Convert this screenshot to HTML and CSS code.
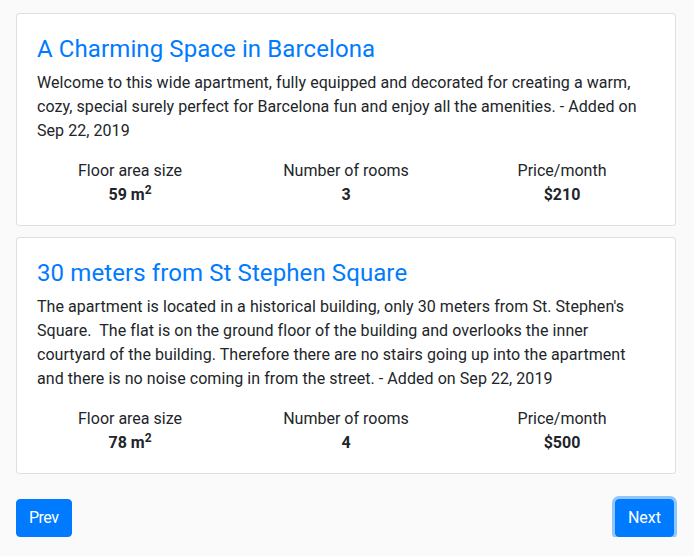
FILE: index.html
```html
<!DOCTYPE html>
<html lang="en">
<head>
<meta charset="utf-8">
<title>Apartments</title>
<link rel="stylesheet" href="styles.css">
</head>
<body>
<main class="page">
  <div class="card">
    <h4 class="card-title">A Charming Space in Barcelona</h4>
    <p class="card-text">Welcome to this wide apartment, fully equipped and decorated for creating a warm, cozy, special surely perfect for Barcelona fun and enjoy all the amenities. - Added on Sep 22, 2019</p>
    <div class="stats">
      <div class="stat"><div class="label">Floor area size</div><div class="value">59 m<sup>2</sup></div></div>
      <div class="stat"><div class="label">Number of rooms</div><div class="value">3</div></div>
      <div class="stat"><div class="label">Price/month</div><div class="value">$210</div></div>
    </div>
  </div>
  <div class="card">
    <h4 class="card-title">30 meters from St Stephen Square</h4>
    <p class="card-text">The apartment is located in a historical building, only 30 meters from St. Stephen's Square.&nbsp; The flat is on the ground floor of the building and overlooks the inner courtyard of the building. Therefore there are no stairs going up into the apartment and there is no noise coming in from the street. - Added on Sep 22, 2019</p>
    <div class="stats">
      <div class="stat"><div class="label">Floor area size</div><div class="value">78 m<sup>2</sup></div></div>
      <div class="stat"><div class="label">Number of rooms</div><div class="value">4</div></div>
      <div class="stat"><div class="label">Price/month</div><div class="value">$500</div></div>
    </div>
  </div>
  <nav class="pager">
    <button class="btn btn-prev" type="button">Prev</button>
    <button class="btn btn-focus" type="button">Next</button>
  </nav>
</main>
</body>
</html>
```
FILE: styles.css
```css
* { box-sizing: border-box; }
html, body { margin: 0; }
body {
  background: #fafafa;
  font-family: Roboto, "Liberation Sans", sans-serif;
  font-size: 16px;
  line-height: 24px;
  color: #212529;
}
.page {
  padding: 13px 18px 0 16px;
  width: 694px;
}
.card {
  background: #fff;
  border: 1px solid rgba(0, 0, 0, 0.125);
  border-radius: 4px;
  padding: 21px 20px 18px;
  margin-bottom: 11px;
  width: 660px;
}
.card-title {
  margin: 0 0 8px;
  font-size: 24px;
  line-height: 28px;
  font-weight: 400;
  color: #007bff;
  letter-spacing: 0.1px;
}
.card-text {
  margin: 0 0 16px;
  letter-spacing: 0.06px;
}
.stats {
  display: grid;
  grid-template-columns: repeat(3, 1fr);
  margin: 0 -15px;
}
.stat {
  padding: 0 15px;
  text-align: center;
}
.value { font-weight: 700; }
.value sup {
  font-size: 75%;
  line-height: 0;
  position: relative;
  vertical-align: baseline;
  top: -0.5em;
}
.pager {
  display: flex;
  justify-content: space-between;
  margin-top: 25px;
  padding-right: 2px;
}
.btn {
  font-family: inherit;
  font-size: 16px;
  line-height: 24px;
  padding: 6px 12px;
  color: #fff;
  background: #007bff;
  border: 1px solid #007bff;
  border-radius: 4px;
  cursor: pointer;
}
.btn-prev { letter-spacing: -0.5px; }
.btn-focus {
  box-shadow: 0 0 0 3px rgba(38, 143, 255, 0.5);
}
```
